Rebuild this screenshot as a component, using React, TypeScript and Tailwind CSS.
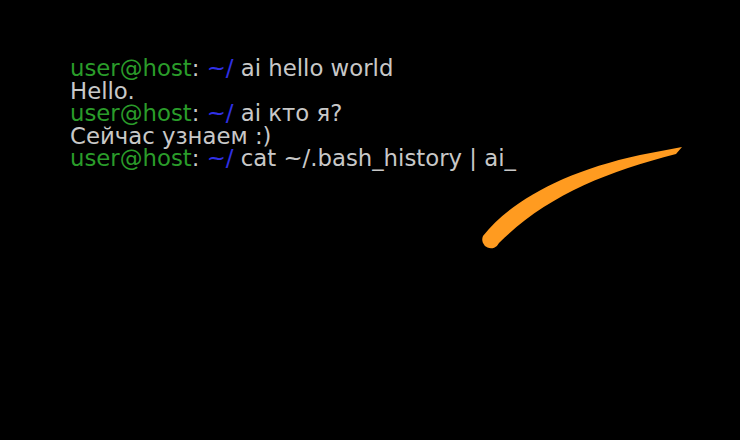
import React from "react";

const G = "text-[#2a9c2a]";
const B = "text-[#3030e6]";

function Prompt({ cmd }: { cmd: string }) {
  return (
    <div>
      <span className={G}>user@host</span>
      <span>: </span>
      <span className={B}>~/</span>
      <span> {cmd}</span>
    </div>
  );
}

export default function App() {
  return (
    <div className="relative w-[740px] h-[440px] bg-black overflow-hidden">
      <div
        className="pt-[57px] pl-[70px] text-[22.8px] leading-[22.5px] text-[#c8c8c8] whitespace-pre"
        style={{ fontFamily: '"DejaVu Sans", sans-serif' }}
      >
        <Prompt cmd="ai hello world" />
        <div>Hello.</div>
        <Prompt cmd="ai кто я?" />
        <div>Сейчас узнаем :)</div>
        <Prompt cmd="cat ~/.bash_history | ai_" />
      </div>
      <svg className="absolute left-0 top-0" width="740" height="440" viewBox="0 0 740 440">
        <path
          d="M 483 236 C 510 202, 562 172, 640 155 L 682 147 L 676 154 C 605 172, 545 197, 499 243 A 8 8 0 0 1 483 236 Z"
          fill="#ff9b20"
        />
      </svg>
    </div>
  );
}
